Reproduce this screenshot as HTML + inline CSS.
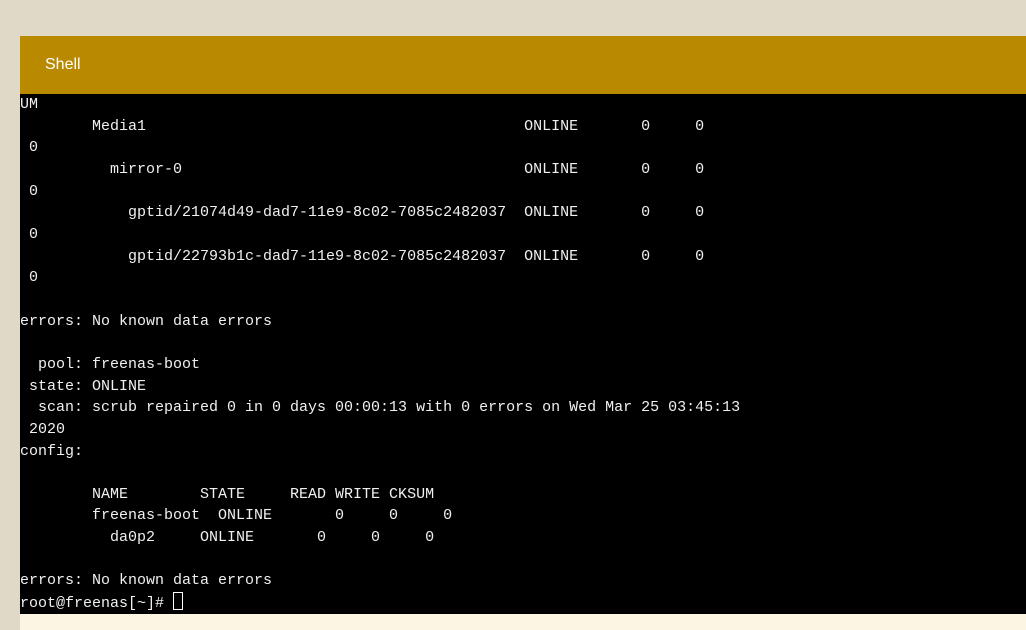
<!DOCTYPE html>
<html><head><meta charset="utf-8"><style>
html,body{margin:0;padding:0;width:1026px;height:630px;overflow:hidden;background:#e0d9c8;}
.panel{position:absolute;left:20px;top:36px;width:1006px;height:594px;background:#fcf5e3;}
.hdr{position:absolute;left:0;top:0;width:1006px;height:58px;background:#b98a00;}
.hdr span{position:absolute;left:25px;top:20px;font:16px "Liberation Sans",sans-serif;color:#fff;}
.term{position:absolute;left:0;top:58px;width:1006px;height:520px;background:#000;overflow:hidden;}
pre{margin:0;font:15px/21.65px "Liberation Mono",monospace;color:#f0f0f0;white-space:pre;}
.cur{display:inline-block;width:8px;height:16px;border:1px solid #fff;vertical-align:-3px;}
</style></head><body>
<div class="panel"><div class="hdr"><span>Shell</span></div>
<div class="term"><pre>UM
        Media1                                          ONLINE       0     0
 0
          mirror-0                                      ONLINE       0     0
 0
            gptid/21074d49-dad7-11e9-8c02-7085c2482037  ONLINE       0     0
 0
            gptid/22793b1c-dad7-11e9-8c02-7085c2482037  ONLINE       0     0
 0

errors: No known data errors

  pool: freenas-boot
 state: ONLINE
  scan: scrub repaired 0 in 0 days 00:00:13 with 0 errors on Wed Mar 25 03:45:13
 2020
config:

        NAME        STATE     READ WRITE CKSUM
        freenas-boot  ONLINE       0     0     0
          da0p2     ONLINE       0     0     0

errors: No known data errors
root@freenas[~]# <span class="cur"></span></pre></div>
</div>
</body></html>
